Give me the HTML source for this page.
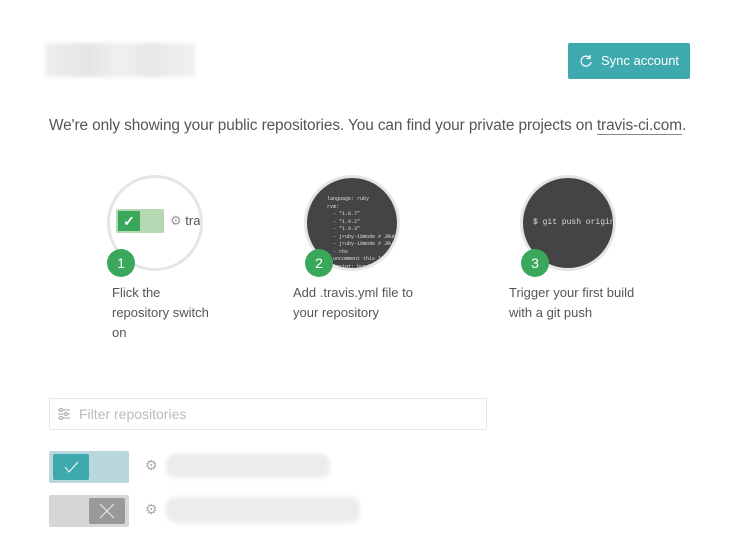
<!DOCTYPE html><html><head><style>
body{margin:0;width:732px;height:535px;background:#fff;font-family:"Liberation Sans",sans-serif;color:#555;position:relative;overflow:hidden}
.a{position:absolute}
.circ{position:absolute;width:90px;height:90px;border-radius:50%;border:3px solid #e5e5e5;overflow:hidden}
.badge{position:absolute;width:28px;height:28px;border-radius:50%;background:#39a85b;color:#fff;font-size:14px;text-align:center;line-height:28px}
.step{position:absolute;font-size:13px;line-height:20px;color:#555}
pre{margin:0;font-family:"Liberation Mono",monospace;color:#ddd}
</style></head><body>
<div class="a" style="left:45px;top:43px;width:150px;height:34px;background:linear-gradient(90deg,#eee,#e4e4e4 30%,#f0f0f0 50%,#e6e6e6 70%,#f2f2f2);filter:blur(2px)"></div>
<div class="a" style="left:568px;top:43px;width:122px;height:36px;background:#3eaaaf;border-radius:2px;color:#fff;font-size:13px;line-height:36px">
<svg class="a" style="left:11px;top:11px" width="14" height="14" viewBox="0 0 14 14"><path d="M11 4A5 5 0 1 0 12 8" fill="none" stroke="#fff" stroke-width="1.2"/><path d="M11 1v3.5H7.5" fill="none" stroke="#fff" stroke-width="1.2"/></svg>
<span class="a" style="left:33px">Sync account</span></div>
<div class="a" style="left:49px;top:117px;font-size:15.4px;letter-spacing:-0.1px;white-space:nowrap">We're only showing your public repositories. You can find your private projects on <span style="border-bottom:1px solid #888">travis-ci.com</span>.</div>

<div class="circ" style="left:107px;top:175px;background:#fff">
<div class="a" style="left:6px;top:31px;width:48px;height:24px;background:#b6d8b3;border-radius:2px"></div>
<div class="a" style="left:8px;top:33px;width:22px;height:20px;background:#39a85b;color:#fff;font-size:14px;text-align:center;line-height:20px;font-weight:bold">✓</div>
<div class="a" style="left:60px;top:35px;color:#999;font-size:13px;white-space:nowrap">⚙ <span style="color:#555">tra</span></div>
</div>
<div class="badge" style="left:107px;top:249px">1</div>
<div class="step" style="left:112px;top:283px">Flick the<br>repository switch<br>on</div>

<div class="circ" style="left:304px;top:175px;background:#444">
<pre class="a" style="left:20px;top:18px;font-size:5px;line-height:7.5px">language: ruby
rvm:
  - "1.8.7"
  - "1.9.2"
  - "1.9.3"
  - jruby-18mode # JRuby
  - jruby-19mode # JRuby
  - rbx
# uncomment this li
# script: bundle</pre></div>
<div class="badge" style="left:305px;top:249px">2</div>
<div class="step" style="left:293px;top:283px">Add .travis.yml file to<br>your repository</div>

<div class="circ" style="left:520px;top:175px;background:#444">
<pre class="a" style="left:10px;top:40px;font-size:8px">$ git push origin</pre></div>
<div class="badge" style="left:521px;top:249px">3</div>
<div class="step" style="left:509px;top:283px">Trigger your first build<br>with a git push</div>

<div class="a" style="left:49px;top:398px;width:436px;height:30px;border:1px solid #e6e6e6;border-radius:2px">
<svg class="a" style="left:7px;top:8px" width="14" height="14" viewBox="0 0 14 14" fill="none" stroke="#aaa" stroke-width="1"><path d="M1 3h12M1 7h12M1 11h12"/><circle cx="4" cy="3" r="1.5" fill="#fff"/><circle cx="9" cy="7" r="1.5" fill="#fff"/><circle cx="4" cy="11" r="1.5" fill="#fff"/></svg>
<span class="a" style="left:29px;top:7px;color:#bbb;font-size:14px">Filter repositories</span></div>

<div class="a" style="left:49px;top:451px;width:80px;height:32px;background:#b8d8dc;border-radius:2px"></div>
<div class="a" style="left:53px;top:454px;width:36px;height:26px;background:#3eaaaf;border-radius:2px"><svg width="36" height="26"><path d="M12 13l4 5 9-10" fill="none" stroke="#fff" stroke-width="1"/></svg></div>
<div class="a" style="left:145px;top:457px;color:#aaa;font-size:14px">⚙</div>
<div class="a" style="left:166px;top:454px;width:164px;height:24px;background:#ececec;border-radius:10px;filter:blur(2px)"></div>

<div class="a" style="left:49px;top:495px;width:80px;height:32px;background:#d6d6d6;border-radius:2px"></div>
<div class="a" style="left:89px;top:498px;width:36px;height:26px;background:#999;border-radius:2px"><svg width="36" height="26"><path d="M11 6l14 14M25 6L11 20" stroke="#eee" stroke-width="1"/></svg></div>
<div class="a" style="left:145px;top:501px;color:#aaa;font-size:14px">⚙</div>
<div class="a" style="left:166px;top:497px;width:194px;height:26px;background:#ececec;border-radius:10px;filter:blur(2px)"></div>
</body></html>
